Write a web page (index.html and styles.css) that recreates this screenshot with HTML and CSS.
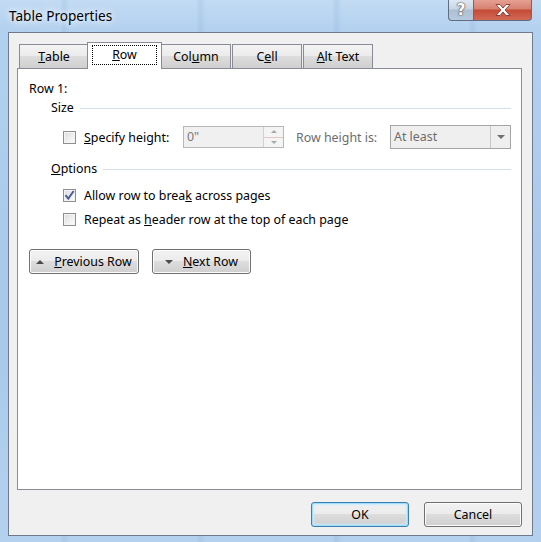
FILE: index.html
```html
<!DOCTYPE html>
<html lang="en">
<head>
    <meta charset="UTF-8">
    <title>Table Properties</title>
    <link rel="stylesheet" href="styles.css">
</head>
<body>
    <div class="window">
        <div class="titlebar">
            <span class="title">Table Properties</span>
            <div class="caption-buttons">
                <span class="cap-btn help">?</span>
                <span class="cap-btn close">
                    <svg width="18" height="12" viewBox="0 0 18 12">
                        <path d="M2 0.5h4l3 3.6 3-3.6h4l-5 5.5 5 5.5h-4l-3-3.6-3 3.6h-4l5-5.5z" fill="#fff" stroke="#7a2a22" stroke-width="0.8"/>
                    </svg>
                </span>
            </div>
        </div>

        <div class="client">
            <div class="tabs">
                <div class="tab"><u>T</u>able</div>
                <div class="tab active"><span class="focus"><u>R</u>ow</span></div>
                <div class="tab">Col<u>u</u>mn</div>
                <div class="tab">C<u>e</u>ll</div>
                <div class="tab"><u>A</u>lt Text</div>
            </div>

            <div class="panel">
                <div class="row-label">Row 1:</div>

                <div class="group-head">Size</div>
                <div class="size-row">
                    <span class="check"></span>
                    <span class="size-label"><u>S</u>pecify height:</span>
                    <div class="spin">
                        <span class="spin-value">0"</span>
                        <span class="spin-btns">
                            <span class="spin-up"></span>
                            <span class="spin-down"></span>
                        </span>
                    </div>
                    <span class="muted">Row height is:</span>
                    <div class="select">
                        <span class="select-value">At least</span>
                        <span class="select-arrow"></span>
                    </div>
                </div>

                <div class="group-head options"><span><u>O</u>ptions</span></div>
                <div class="option">
                    <span class="check checked">
                        <svg width="11" height="11" viewBox="0 0 11 11">
                            <path d="M1.5 5.2l2.8 3.4 5.4-7.6" fill="none" stroke="#4a5f94" stroke-width="2"/>
                        </svg>
                    </span>
                    <span>Allow row to brea<u>k</u> across pages</span>
                </div>
                <div class="option">
                    <span class="check"></span>
                    <span>Repeat as <u>h</u>eader row at the top of each page</span>
                </div>

                <div class="nav-buttons">
                    <button class="btn prev"><span class="tri-up"></span><u>P</u>revious Row</button>
                    <button class="btn next"><span class="tri-down"></span><u>N</u>ext Row</button>
                </div>
            </div>

            <div class="footer">
                <button class="btn dlg default">OK</button>
                <button class="btn dlg">Cancel</button>
            </div>
        </div>
    </div>
</body>
</html>
```

FILE: styles.css
```css
* {
    box-sizing: border-box;
}
body {
    margin: 0;
    font-family: "Noto Sans", "Open Sans", sans-serif;
    font-size: 12.4px;
    color: #000;
    background: #fff;
}
.window {
    width: 541px;
    height: 542px;
    overflow: hidden;
    background:
        repeating-linear-gradient(90deg, rgba(255,255,255,0) 0, rgba(255,255,255,0) 60px, rgba(120,160,200,0.18) 64px, rgba(255,255,255,0) 70px, rgba(255,255,255,0) 136px),
        linear-gradient(180deg, #c3dbf3 0%, #b2d0ef 6%, #a9c8ea 60%, #b4d1ef 100%);
}
.titlebar {
    height: 32px;
    display: flex;
    align-items: flex-start;
    padding-right: 9px;
}
.title {
    padding: 6px 0 0 9px;
    font-size: 13.6px;
    line-height: 20px;
    text-shadow: 0 0 6px #fff, 0 0 10px #fff;
}
.caption-buttons {
    margin-left: auto;
    display: flex;
    height: 21px;
}
.cap-btn {
    height: 21px;
    display: flex;
    align-items: center;
    justify-content: center;
    border: 1px solid #5f6d80;
    border-top: none;
}
.help {
    width: 25px;
    border-radius: 0 0 0 4px;
    border-right: none;
    background: linear-gradient(180deg, #dfe8f2 0%, #c7d5e3 45%, #aebfd2 50%, #b7cadd 100%);
    color: #fff;
    font-family: "DejaVu Sans", sans-serif;
    font-weight: bold;
    font-size: 15px;
    text-shadow: 0 0 1px #555, 0 0 1px #555, 0 0 2px #555;
}
.close {
    width: 59px;
    border-radius: 0 0 4px 0;
    background: linear-gradient(180deg, #e5a093 0%, #d7806f 45%, #c44a35 50%, #d26a55 100%);
}
.client {
    margin-left: 8px;
    width: 525px;
    height: 504px;
    border: 1px solid #6e7b8c;
    background: #f0f0f0;
    padding: 9px 10px 0 8px;
}
.tabs {
    display: flex;
    height: 26px;
    padding-left: 2px;
    gap: 1px;
    position: relative;
    z-index: 1;
}
.tab {
    width: 70px;
    height: 24px;
    margin-top: 2px;
    border: 1px solid #898c95;
    border-bottom: none;
    background: linear-gradient(180deg, #f3f3f3 0%, #ebebeb 50%, #dddddd 50%, #cfcfcf 100%);
    display: flex;
    align-items: center;
    justify-content: center;
    line-height: 16px;
    padding-top: 1px;
}
.tab.active {
    width: 75px;
    height: 27px;
    margin: 0 -2px 0 -3px;
    background: #fff;
    padding: 0 0 2px;
}
.focus {
    width: 65px;
    height: 20px;
    border: 1px dotted #000;
    display: flex;
    align-items: center;
    justify-content: center;
}
.panel {
    width: 505px;
    height: 422px;
    border: 1px solid #898c95;
    background: #fff;
    padding: 12px 10px 0 11px;
}
.row-label {
    line-height: 16px;
}
.group-head {
    margin: 3px 0 0 22px;
    line-height: 16px;
    display: flex;
    align-items: center;
    gap: 6px;
}
.group-head::after {
    content: "";
    flex: 1;
    border-top: 1px solid #d5dfe5;
}
.group-head.options {
    margin-top: 12px;
}
.size-row {
    margin: 9px 0 0 34px;
    height: 24px;
    display: flex;
    align-items: center;
}
.check {
    width: 13px;
    height: 13px;
    border: 1px solid #8e8f8f;
    background: linear-gradient(135deg, #dcdcdc 0%, #f1f1f1 60%, #fdfdfd 100%);
    box-shadow: inset 0 0 0 1px #f4f4f4;
    display: inline-flex;
    align-items: center;
    justify-content: center;
    flex: none;
}
.size-label {
    margin-left: 8px;
    width: 99px;
}
.spin {
    width: 101px;
    height: 22px;
    border: 1px solid #b5b9bd;
    background: #f0f0f0;
    display: flex;
}
.spin-value {
    flex: 1;
    padding-left: 3px;
    line-height: 20px;
    color: #7a7a7a;
}
.spin-btns {
    width: 20px;
    display: flex;
    flex-direction: column;
    border-left: 1px solid #d0d0d0;
}
.spin-up, .spin-down {
    flex: 1;
    display: flex;
    align-items: center;
    justify-content: center;
    background: #f4f4f4;
}
.spin-up {
    border-bottom: 1px solid #e2c7c7;
}
.spin-up::before {
    content: "";
    border: 3px solid transparent;
    border-bottom: 3px solid #a8a8a8;
    border-top: none;
}
.spin-down::before {
    content: "";
    border: 3px solid transparent;
    border-top: 3px solid #a8a8a8;
    border-bottom: none;
}
.muted {
    color: #6d6d6d;
    margin-left: 12px;
    width: 94px;
}
.select {
    width: 121px;
    height: 24px;
    border: 1px solid #a5a5a5;
    background: #efefef;
    display: flex;
}
.select-value {
    flex: 1;
    padding-left: 3px;
    line-height: 22px;
    color: #6d6d6d;
}
.select-arrow {
    width: 20px;
    border-left: 1px solid #c8c8c8;
    display: flex;
    align-items: center;
    justify-content: center;
}
.select-arrow::before {
    content: "";
    border: 4px solid transparent;
    border-top: 4px solid #707070;
    border-bottom: none;
}
.option {
    margin-left: 34px;
    height: 20px;
    display: flex;
    align-items: center;
    gap: 8px;
}
.option + .option {
    margin-top: 4px;
}
.group-head.options + .option {
    margin-top: 8px;
}
.nav-buttons {
    margin-top: 20px;
    display: flex;
    gap: 13px;
}
.btn {
    height: 25px;
    border: 1px solid #707070;
    border-radius: 3px;
    background: linear-gradient(180deg, #f2f2f2 0%, #ebebeb 50%, #dddddd 50%, #cfcfcf 100%);
    box-shadow: inset 0 0 0 1px #fcfcfc;
    font: inherit;
    color: #000;
    padding: 0;
    display: flex;
    align-items: center;
    justify-content: center;
}
.prev {
    width: 110px;
}
.next {
    width: 99px;
}
.tri-up, .tri-down {
    width: 0;
    height: 0;
    margin-right: 10px;
    border: 4px solid transparent;
}
.tri-up {
    border-bottom: 4px solid #4a4a4a;
    border-top: none;
}
.tri-down {
    border-top: 4px solid #4a4a4a;
    border-bottom: none;
}
.footer {
    margin-top: 12px;
    width: 505px;
    display: flex;
    justify-content: flex-end;
    gap: 15px;
}
.dlg {
    width: 98px;
}
.default {
    border-color: #3c7fb1;
    box-shadow: inset 0 0 0 1px #9fdcf7, inset 0 0 2px 2px #c6ecfb;
}
```
